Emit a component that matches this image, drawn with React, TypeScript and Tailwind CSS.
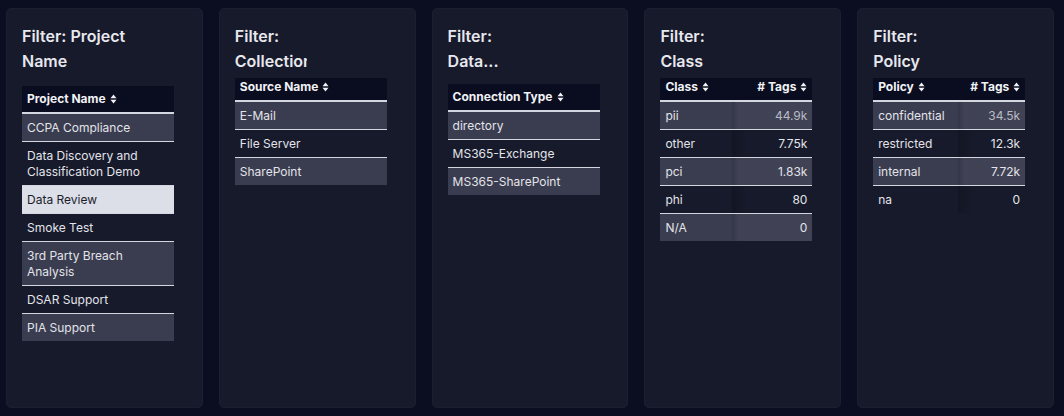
import React from "react";

const SortIcon = () => (
  <svg width="7" height="10" viewBox="0 0 7 10" className="ml-1 inline-block shrink-0" fill="currentColor">
    <path d="M0.5 4.2 L3.5 0.6 L6.5 4.2 Z" />
    <path d="M0.5 5.8 L3.5 9.4 L6.5 5.8 Z" />
  </svg>
);

type Row = { label: string; value?: string; selected?: boolean; dim?: boolean };

const Title = ({ l1, l2, clip }: { l1: string; l2: string; clip?: boolean }) => (
  <div className="text-base font-semibold leading-[25px] text-[#e7e8ee]">
    <div>{l1}</div>
    {clip ? (
      <div className="w-[72px] overflow-hidden whitespace-nowrap">{l2}</div>
    ) : (
      <div>{l2}</div>
    )}
  </div>
);

const SingleTable = ({
  header,
  rows,
  mt,
  tall,
}: {
  header: string;
  rows: Row[];
  mt: string;
  tall?: boolean;
}) => (
  <div className={`w-[152px] ${mt} text-xs`}>
    <div
      className={`flex border-b border-[#d4d6e0] bg-[#0a0c1f] px-[5px] font-bold text-[#f1f2f6] ${
        tall ? "h-[27px] items-center" : "h-[23px] items-start pt-px"
      }`}
    >
      <span className="leading-4">{header}</span>
      <span className={tall ? "flex items-center" : "flex h-4 items-center"}>
        <SortIcon />
      </span>
    </div>
    {rows.map((r, i) => (
      <div
        key={r.label}
        className={`border-t border-[#d4d6e0] px-[5px] pt-[6px] pb-[5px] leading-4 ${
          r.selected
            ? "bg-[#dcdee8] text-[#1b1d2b]"
            : i % 2 === 0
            ? "bg-[#3a3c4f] text-[#e3e4ea]"
            : "text-[#e3e4ea]"
        }`}
      >
        {r.label}
      </div>
    ))}
  </div>
);

const NumTable = ({
  col1,
  rows,
  w1,
}: {
  col1: string;
  rows: Row[];
  w1: string;
}) => (
  <div className="mt-1 w-[152px] text-xs">
    <div className="flex h-[23px] items-start border-b border-[#d4d6e0] bg-[#0a0c1f] pt-px font-bold text-[#f1f2f6]">
      <div className={`${w1} flex h-4 items-center pl-[5px]`}>
        <span className="leading-4">{col1}</span>
        <SortIcon />
      </div>
      <div className="flex h-4 flex-1 items-center justify-end pr-[5px]">
        <span className="leading-4"># Tags</span>
        <SortIcon />
      </div>
    </div>
    {rows.map((r, i) => (
      <div
        key={r.label}
        className={`flex border-t border-[#d4d6e0] leading-4 text-[#e3e4ea] ${
          i % 2 === 0 ? "bg-[#3a3c4f]" : ""
        }`}
      >
        <div className={`${w1} pl-[5px] pt-[6px] pb-[5px]`}>{r.label}</div>
        <div
          className={`flex-1 pr-[5px] pt-[6px] pb-[5px] text-right ${
            i % 2 === 0
              ? "bg-[linear-gradient(90deg,rgba(0,0,0,0.12),rgba(255,255,255,0.03)_6px)]"
              : "bg-[linear-gradient(90deg,rgba(0,0,0,0.18),rgba(0,0,0,0)_16px)]"
          } ${r.dim ? "text-[#b9bbc6]" : ""}`}
        >
          {r.value}
        </div>
      </div>
    ))}
  </div>
);

const Panel = ({ children }: { children: React.ReactNode }) => (
  <div className="flex-1 rounded-[5px] border border-[#1b1f31] bg-[#171a2b] pl-[15px] pt-[15px]">
    {children}
  </div>
);

export default function App() {
  return (
    <div
      className="flex h-[416px] w-[1064px] gap-4 bg-[#0b0e20] pb-2 pl-[6px] pr-[10px] pt-2"
      style={{ fontFamily: "Inter, 'Noto Sans', sans-serif" }}
    >
      <Panel>
        <Title l1="Filter: Project" l2="Name" />
        <SingleTable
          header="Project Name"
          mt="mt-3"
          tall
          rows={[
            { label: "CCPA Compliance" },
            { label: "Data Discovery and Classification Demo" },
            { label: "Data Review", selected: true },
            { label: "Smoke Test" },
            { label: "3rd Party Breach Analysis" },
            { label: "DSAR Support" },
            { label: "PIA Support" },
          ]}
        />
      </Panel>
      <Panel>
        <Title l1="Filter:" l2="Collection" clip />
        <SingleTable
          header="Source Name"
          mt="mt-1"
          rows={[{ label: "E-Mail" }, { label: "File Server" }, { label: "SharePoint" }]}
        />
      </Panel>
      <Panel>
        <Title l1="Filter:" l2="Data..." />
        <SingleTable
          header="Connection Type"
          mt="mt-[10px]"
          tall
          rows={[
            { label: "directory" },
            { label: "MS365-Exchange" },
            { label: "MS365-SharePoint" },
          ]}
        />
      </Panel>
      <Panel>
        <Title l1="Filter:" l2="Class" />
        <NumTable
          col1="Class"
          w1="w-[72px]"
          rows={[
            { label: "pii", value: "44.9k", dim: true },
            { label: "other", value: "7.75k" },
            { label: "pci", value: "1.83k" },
            { label: "phi", value: "80" },
            { label: "N/A", value: "0" },
          ]}
        />
      </Panel>
      <Panel>
        <Title l1="Filter:" l2="Policy" />
        <NumTable
          col1="Policy"
          w1="w-[85px]"
          rows={[
            { label: "confidential", value: "34.5k", dim: true },
            { label: "restricted", value: "12.3k" },
            { label: "internal", value: "7.72k" },
            { label: "na", value: "0" },
          ]}
        />
      </Panel>
    </div>
  );
}
